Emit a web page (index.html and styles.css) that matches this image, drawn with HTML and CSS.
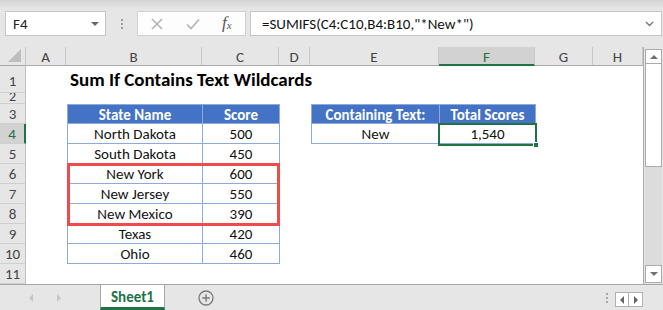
FILE: index.html
```html
<!DOCTYPE html>
<html>
<head>
<meta charset="utf-8">
<link rel="stylesheet" href="styles.css">
</head>
<body>
<div class="app">
  <div class="fbar">
    <div class="namebox"><span class="nb-text">F4</span><span class="caret"></span></div>
    <div class="vdots"><span></span><span></span><span></span></div>
    <div class="fxbox">
      <svg class="ico-x" width="12" height="12" viewBox="0 0 12 12"><path d="M1 1L11 11M11 1L1 11" stroke="#b3b3b3" stroke-width="1.6" fill="none"/></svg>
      <svg class="ico-check" width="14" height="12" viewBox="0 0 14 12"><path d="M1 6.5L5 10.5L13 1.5" stroke="#b3b3b3" stroke-width="1.6" fill="none"/></svg>
      <span class="ico-fx">f<span class="fx-x">x</span></span>
    </div>
    <div class="formula"><span class="ftext">=SUMIFS(C4:C10,B4:B10,"*New*")</span><svg class="chev" width="9" height="6" viewBox="0 0 9 6"><path d="M1 1L4.5 4.5L8 1" stroke="#777" stroke-width="1.4" fill="none"/></svg></div>
  </div>

  <div class="sheetwrap">
    <div class="sheet">
      <div class="corner"><span class="tri"></span></div>
      <div class="ch">A</div>
      <div class="ch">B</div>
      <div class="ch">C</div>
      <div class="ch">D</div>
      <div class="ch">E</div>
      <div class="ch sel">F</div>
      <div class="ch">G</div>
      <div class="ch">H</div>

      <div class="rh r1">1</div>
      <div class="rh r2"><span>2</span></div>
      <div class="rh r3">3</div>
      <div class="rh r4 sel">4</div>
      <div class="rh r5">5</div>
      <div class="rh r6">6</div>
      <div class="rh r7">7</div>
      <div class="rh r8">8</div>
      <div class="rh r9">9</div>
      <div class="rh r10">10</div>
      <div class="rh r11">11</div>

      <div class="body"></div>

      <div class="title">Sum If Contains Text Wildcards</div>

      <div class="tbl tbl1">
        <div class="c h">State Name</div><div class="c h">Score</div>
        <div class="c">North Dakota</div><div class="c">500</div>
        <div class="c">South Dakota</div><div class="c">450</div>
        <div class="c">New York</div><div class="c">600</div>
        <div class="c">New Jersey</div><div class="c">550</div>
        <div class="c">New Mexico</div><div class="c">390</div>
        <div class="c">Texas</div><div class="c">420</div>
        <div class="c">Ohio</div><div class="c">460</div>
      </div>

      <div class="tbl tbl2">
        <div class="c h">Containing Text:</div><div class="c h">Total Scores</div>
        <div class="c">New</div><div class="c">1,540</div>
      </div>

      <div class="redbox"></div>
      <div class="selbox"><span class="handle"></span></div>
    </div>
    <div class="vscroll">
      <div class="sbtn up"><span class="tri-up"></span></div>
      <div class="thumb"></div>
      <div class="trough"></div>
      <div class="sbtn down"><span class="tri-down"></span></div>
    </div>
  </div>

  <div class="tabbar">
    <div class="nav">
      <span class="nl"></span>
      <span class="nr"></span>
    </div>
    <div class="tab">Sheet1</div>
    <div class="add">
      <svg width="16" height="16" viewBox="0 0 16 16"><circle cx="8" cy="8" r="7" stroke="#7a7a7a" stroke-width="1.3" fill="none"/><path d="M8 4.2V11.8M4.2 8H11.8" stroke="#7a7a7a" stroke-width="1.4"/></svg>
    </div>
    <div class="spacer"></div>
    <div class="hdots"><span></span><span></span><span></span></div>
    <div class="hbtns">
      <div class="hb"><span class="tl"></span></div>
      <div class="hb"><span class="tr"></span></div>
    </div>
  </div>
</div>
</body>
</html>
```

FILE: styles.css
```css
* { box-sizing: border-box; }

html, body {
  margin: 0;
  padding: 0;
}

body {
  width: 663px;
  height: 310px;
  overflow: hidden;
  background: #e6e6e6;
  font-family: Carlito, Lato, "Liberation Sans", sans-serif;
  color: #111;
}

.app {
  display: flex;
  flex-direction: column;
  width: 663px;
  height: 310px;
}

/* ---------- formula bar ---------- */
.fbar {
  height: 47px;
  display: flex;
  align-items: flex-start;
  padding: 11px 1px 0 5px;
  background: linear-gradient(#d4d4d4 0px, #e6e6e6 9px);
}

.namebox {
  width: 101px;
  height: 25px;
  background: #fff;
  border: 1px solid #c6c6c6;
  display: flex;
  align-items: center;
  padding-left: 7px;
  font-size: 15px;
  color: #222;
}
.nb-text { flex: 1; }
.caret {
  width: 0;
  height: 0;
  border-left: 4px solid transparent;
  border-right: 4px solid transparent;
  border-top: 4px solid #6a6a6a;
  margin-right: 6px;
}

.vdots {
  width: 31px;
  height: 25px;
  display: flex;
  flex-direction: column;
  align-items: center;
  justify-content: center;
  gap: 2px;
}
.vdots span {
  width: 2px;
  height: 2px;
  background: #9a9a9a;
}

.fxbox {
  width: 109px;
  height: 25px;
  background: #fdfdfd;
  border: 1px solid #d0d0d0;
  display: flex;
  align-items: center;
  padding-left: 13px;
}
.ico-x { margin-right: 23px; }
.ico-check { margin-right: 22px; }
.ico-fx {
  font-family: "Liberation Serif", serif;
  font-style: italic;
  font-size: 17px;
  color: #555;
  line-height: 1;
  margin-top: -3px;
}
.fx-x {
  font-size: 11px;
  position: relative;
  top: 1px;
}

.formula {
  margin-left: 4px;
  flex: 1;
  height: 25px;
  background: #fff;
  border: 1px solid #c6c6c6;
  display: flex;
  align-items: center;
  padding-left: 11px;
  padding-right: 7px;
  font-size: 15px;
  color: #111;
}
.ftext { flex: 1; white-space: nowrap; }
.chev { display: block; }

/* ---------- sheet ---------- */
.sheetwrap {
  display: flex;
  height: 237px;
}

.sheet {
  width: 644px;
  display: grid;
  grid-template-columns: 26px 40px 136px 77px 31px 129px 96px 58px 50px;
  grid-template-rows: 19px 27px 11px repeat(9, 20px);
  border-right: 1px solid #ababab;
  font-size: 15px;
}

.corner {
  grid-column: 1;
  grid-row: 1;
  background: #e6e6e6;
  border-right: 1px solid #c8c8c8;
  border-bottom: 1px solid #ababab;
  display: flex;
  align-items: flex-end;
  justify-content: flex-end;
  padding: 0 4px 3px 0;
}
.tri {
  width: 0;
  height: 0;
  border-left: 13px solid transparent;
  border-bottom: 13px solid #bdbdbd;
}

.ch {
  grid-row: 1;
  background: #e6e6e6;
  border-right: 1px solid #c8c8c8;
  border-bottom: 1px solid #ababab;
  display: flex;
  align-items: center;
  justify-content: center;
  color: #444;
  font-size: 15px;
  padding-top: 1px;
}
.ch:last-of-type { border-right: none; }
.ch.sel {
  background: #d2d2d2;
  color: #217346;
  border-bottom: 2px solid #217346;
  padding-top: 2px;
}

.rh {
  grid-column: 1;
  background: #e6e6e6;
  border-right: 1px solid #c0c0c0;
  border-bottom: 1px solid #cfcfcf;
  display: flex;
  align-items: center;
  justify-content: center;
  color: #444;
  font-size: 15px;
  overflow: hidden;
}
.rh.r1 { grid-row: 2; padding-top: 4px; }
.rh.r2 { grid-row: 3; align-items: flex-end; }
.rh.r2 span { line-height: 1; font-size: 14px; margin-bottom: -1px; }
.rh.r3 { grid-row: 4; }
.rh.r4 { grid-row: 5; }
.rh.r5 { grid-row: 6; }
.rh.r6 { grid-row: 7; }
.rh.r7 { grid-row: 8; }
.rh.r8 { grid-row: 9; }
.rh.r9 { grid-row: 10; }
.rh.r10 { grid-row: 11; }
.rh.r11 { grid-row: 12; }
.rh.sel {
  background: #d2d2d2;
  color: #217346;
  border-right: 2px solid #217346;
}

.body {
  grid-column: 2 / -1;
  grid-row: 2 / -1;
  background: #fff;
}

.title {
  grid-column: 3 / 7;
  grid-row: 2;
  font-weight: bold;
  font-size: 19px;
  color: #000;
  align-self: end;
  padding-left: 4px;
  line-height: 24px;
  margin-bottom: 1px;
  white-space: nowrap;
}

.tbl {
  display: grid;
  grid-auto-rows: 20px;
  margin-left: 1px;
  justify-self: start;
  align-self: start;
}
.tbl1 {
  grid-column: 3 / 5;
  grid-row: 4 / 12;
  grid-template-columns: 136px 77px;
}
.tbl2 {
  grid-column: 6 / 8;
  grid-row: 4 / 6;
  grid-template-columns: 129px 96px;
}

.c {
  border-right: 1px solid #8ea9db;
  border-bottom: 1px solid #8ea9db;
  display: flex;
  align-items: center;
  justify-content: center;
  font-size: 15px;
  color: #111;
  white-space: nowrap;
  padding-top: 1px;
}
.c:nth-child(odd) { border-left: 1px solid #8ea9db; }
.c.h {
  border-top: 1px solid #8ea9db;
  background: #4472c4;
  color: #fff;
  font-weight: bold;
}

.redbox {
  grid-column: 3 / 5;
  grid-row: 7 / 10;
  margin: -1px -1px -2px 1px;
  border: 3px solid #f04a4c;
}

.selbox {
  grid-column: 7 / 8;
  grid-row: 5 / 6;
  margin: -1px -2px -2px -1px;
  border: 2px solid #217346;
  position: relative;
}
.handle {
  position: absolute;
  right: -4px;
  bottom: -4px;
  width: 6px;
  height: 6px;
  background: #217346;
  border: 1px solid #fff;
}

/* ---------- vertical scrollbar ---------- */
.vscroll {
  width: 19px;
  display: flex;
  flex-direction: column;
  padding: 2px 1px 1px 1px;
  background: #e6e6e6;
}
.sbtn {
  background: #fff;
  border: 1px solid #ababab;
  display: flex;
  align-items: center;
  justify-content: center;
}
.sbtn.up { height: 15px; }
.sbtn.down { height: 18px; }
.thumb {
  height: 103px;
  background: #fff;
  border: 1px solid #ababab;
  border-top: none;
}
.trough {
  flex: 1;
  background: #dcdcdc;
}
.tri-up {
  width: 0;
  height: 0;
  border-left: 4px solid transparent;
  border-right: 4px solid transparent;
  border-bottom: 4px solid #707070;
}
.tri-down {
  width: 0;
  height: 0;
  border-left: 4px solid transparent;
  border-right: 4px solid transparent;
  border-top: 4px solid #707070;
}

/* ---------- tab bar ---------- */
.tabbar {
  height: 26px;
  display: flex;
  align-items: stretch;
  border-top: 1px solid #a6a6a6;
  background: #e6e6e6;
}
.nav {
  width: 100px;
  display: flex;
  align-items: center;
  padding-left: 29px;
  gap: 24px;
}
.nl {
  width: 0;
  height: 0;
  border-top: 4px solid transparent;
  border-bottom: 4px solid transparent;
  border-right: 4px solid #c4c4c4;
}
.nr {
  width: 0;
  height: 0;
  border-top: 4px solid transparent;
  border-bottom: 4px solid transparent;
  border-left: 4px solid #c4c4c4;
}
.tab {
  width: 65px;
  background: #fff;
  border-left: 1px solid #a6a6a6;
  border-right: 1px solid #a6a6a6;
  border-bottom: 3px solid #217346;
  color: #217346;
  font-weight: bold;
  font-size: 15px;
  display: flex;
  align-items: center;
  justify-content: center;
  padding-top: 1px;
}
.add {
  width: 82px;
  display: flex;
  align-items: center;
  justify-content: center;
}
.spacer { flex: 1; }
.hdots {
  width: 14px;
  display: flex;
  flex-direction: column;
  align-items: center;
  justify-content: center;
  gap: 2px;
  margin-right: 1px;
}
.hdots span {
  width: 2px;
  height: 2px;
  background: #a8a8a8;
}
.hbtns {
  display: flex;
  margin: 7px 20px 3px 0;
  border: 1px solid #b0b0b0;
  background: #fff;
}
.hb {
  width: 13px;
  display: flex;
  align-items: center;
  justify-content: center;
}
.hb:first-child { border-right: 1px solid #b0b0b0; }
.tl {
  width: 0;
  height: 0;
  border-top: 4px solid transparent;
  border-bottom: 4px solid transparent;
  border-right: 4px solid #666;
}
.tr {
  width: 0;
  height: 0;
  border-top: 4px solid transparent;
  border-bottom: 4px solid transparent;
  border-left: 4px solid #666;
}
```
